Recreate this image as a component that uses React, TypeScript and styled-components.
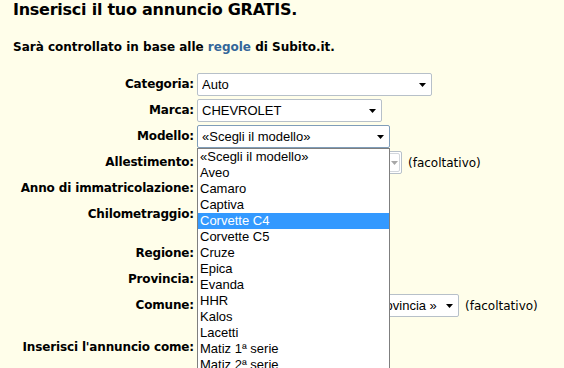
import React from "react";
import styled, { createGlobalStyle } from "styled-components";

const GlobalStyle = createGlobalStyle`
  html, body {
    margin: 0;
    padding: 0;
    background: #fffeea;
  }
  body {
    font-family: "DejaVu Sans", Verdana, sans-serif;
    color: #000;
  }
`;

const Page = styled.div`
  position: relative;
  width: 564px;
  height: 368px;
  overflow: hidden;
  padding: 0 13px;
  box-sizing: border-box;
`;

const Title = styled.h1`
  margin: 0;
  font-size: 16px;
  line-height: 20px;
  font-weight: bold;
  letter-spacing: -0.25px;
  white-space: nowrap;
`;

const Intro = styled.p`
  margin: 20px 0 0;
  font-size: 12px;
  line-height: 15px;
  font-weight: bold;
  white-space: nowrap;
`;

const RulesLink = styled.a`
  color: #336699;
  text-decoration: none;
`;

const Form = styled.div`
  margin-top: 18px;
  display: grid;
  grid-template-columns: 181px auto;
  column-gap: 3px;
  row-gap: 3px;
  align-items: start;
`;

const Label = styled.div`
  font-size: 12px;
  font-weight: bold;
  letter-spacing: -0.15px;
  line-height: 23px;
  text-align: right;
  white-space: nowrap;
`;

const Field = styled.div<{ $extra?: number }>`
  position: relative;
  display: flex;
  flex-direction: column;
  align-items: flex-start;
  padding-bottom: ${(p) => p.$extra ?? 0}px;
`;

const Inline = styled.div`
  display: flex;
  align-items: center;
  gap: 6px;
  font-size: 12px;
  white-space: nowrap;
`;

const Hint = styled.div`
  font-size: 10px;
  line-height: 13px;
  color: #555;
`;

const SelectBox = styled.div<{ $width: number; $focused?: boolean }>`
  box-sizing: border-box;
  width: ${(p) => p.$width}px;
  height: 23px;
  border: 1px solid ${(p) => (p.$focused ? "#7f9db9" : "#b7c0c9")};
  border-radius: 2px;
  background: #fff;
  display: flex;
  align-items: center;
  padding-left: 4px;
  font-family: "Liberation Sans", Arial, sans-serif;
  font-size: 13px;
  color: #000;
`;

const SelectValue = styled.span`
  flex: 1;
  overflow: hidden;
  white-space: nowrap;
`;

const DropButton = styled.span<{ $disabled?: boolean }>`
  box-sizing: border-box;
  width: ${(p) => (p.$disabled ? 12 : 16)}px;
  height: ${(p) => (p.$disabled ? 19 : 21)}px;
  margin-right: 1px;
  display: flex;
  align-items: center;
  justify-content: center;
  border: 1px solid ${(p) => (p.$disabled ? "#d3d7dc" : "transparent")};
  border-radius: 2px;
`;

const TextInput = styled.div<{ $width: number }>`
  box-sizing: border-box;
  width: ${(p) => p.$width}px;
  height: 23px;
  border: 1px solid #7f9db9;
  background: #fff;
`;

const OptionList = styled.ul`
  position: absolute;
  top: 23px;
  left: 0;
  width: 193px;
  box-sizing: border-box;
  margin: 0;
  padding: 0;
  list-style: none;
  background: #fff;
  border: 1px solid #7f7f7f;
  z-index: 10;
  font-family: "Liberation Sans", Arial, sans-serif;
  font-size: 13px;
`;

const OptionItem = styled.li<{ $selected?: boolean }>`
  height: 16px;
  line-height: 16px;
  padding-left: 2px;
  white-space: nowrap;
  background: ${(p) => (p.$selected ? "#3399ff" : "transparent")};
  color: ${(p) => (p.$selected ? "#fff" : "#000")};
`;

const RadioRow = styled.div`
  display: flex;
  gap: 10px;
  font-size: 12px;
  line-height: 23px;
`;

const Caret = ({ disabled }: { disabled?: boolean }) => (
  <svg width="7" height="4" viewBox="0 0 7 4">
    <polygon points="0,0 7,0 3.5,4" fill={disabled ? "#a7a7a7" : "#000"} />
  </svg>
);

interface SelectProps {
  width: number;
  value: string;
  focused?: boolean;
  disabled?: boolean;
}

const Select = ({ width, value, focused, disabled }: SelectProps) => (
  <SelectBox $width={width} $focused={focused}>
    <SelectValue>{value}</SelectValue>
    <DropButton $disabled={disabled}>
      <Caret disabled={disabled} />
    </DropButton>
  </SelectBox>
);

const models = [
  "«Scegli il modello»",
  "Aveo",
  "Camaro",
  "Captiva",
  "Corvette C4",
  "Corvette C5",
  "Cruze",
  "Epica",
  "Evanda",
  "HHR",
  "Kalos",
  "Lacetti",
  "Matiz 1ª serie",
  "Matiz 2ª serie",
  "Nubira",
  "Orlando",
  "Spark",
];

export default function App() {
  return (
    <Page>
      <GlobalStyle />
      <Title>Inserisci il tuo annuncio GRATIS.</Title>
      <Intro>
        Sarà controllato in base alle <RulesLink href="#">regole</RulesLink> di Subito.it.
      </Intro>
      <Form>
        <Label>Categoria:</Label>
        <Field>
          <Select width={235} value="Auto" />
        </Field>

        <Label>Marca:</Label>
        <Field>
          <Select width={185} value="CHEVROLET" />
        </Field>

        <Label>Modello:</Label>
        <Field>
          <Select width={193} value="«Scegli il modello»" focused />
          <OptionList>
            {models.map((m) => (
              <OptionItem key={m} $selected={m === "Corvette C4"}>
                {m}
              </OptionItem>
            ))}
          </OptionList>
        </Field>

        <Label>Allestimento:</Label>
        <Field>
          <Inline>
            <Select width={205} value="«Scegli l'allestimento»" disabled />
            (facoltativo)
          </Inline>
        </Field>

        <Label>Anno di immatricolazione:</Label>
        <Field>
          <Select width={90} value="Anno" />
        </Field>

        <Label>Chilometraggio:</Label>
        <Field>
          <TextInput $width={90} />
          <Hint>es. 85000</Hint>
        </Field>

        <Label>Regione:</Label>
        <Field>
          <Select width={180} value="«Scegli la regione»" />
        </Field>

        <Label>Provincia:</Label>
        <Field>
          <Select width={180} value="«Scegli la provincia»" />
        </Field>

        <Label>Comune:</Label>
        <Field $extra={16}>
          <Inline>
            <Select width={262} value="« Devi prima selezionare una provincia »" />
            (facoltativo)
          </Inline>
        </Field>

        <Label>Inserisci l'annuncio come:</Label>
        <Field>
          <RadioRow>
            <span>Privato</span>
            <span>Azienda</span>
          </RadioRow>
        </Field>
      </Form>
    </Page>
  );
}
